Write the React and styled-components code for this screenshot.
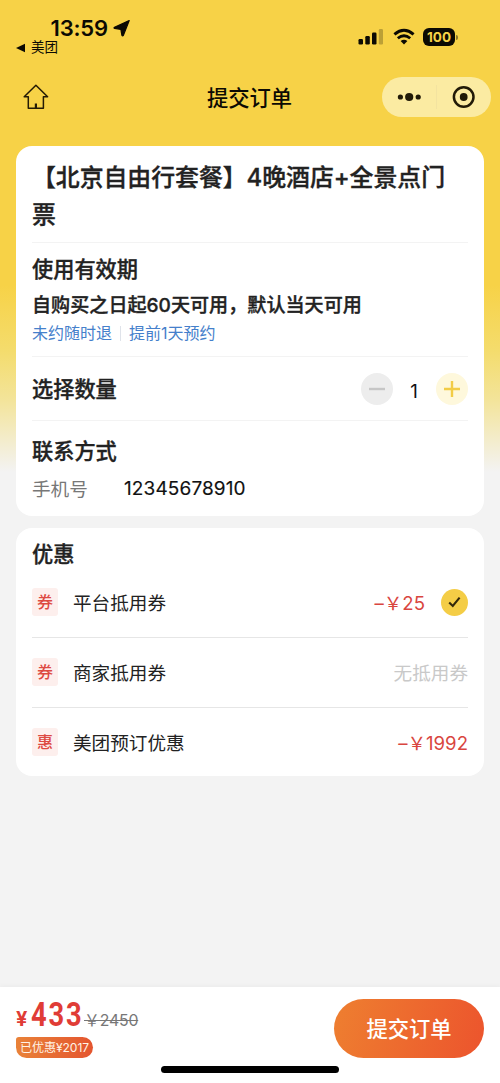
import React, { useState } from "react";
import styled, { createGlobalStyle, css } from "styled-components";

const GlobalStyle = createGlobalStyle`
  * {
    box-sizing: border-box;
  }
  body {
    margin: 0;
    font-family: Inter, "Noto Sans CJK SC", sans-serif;
    color: #222;
  }
  button {
    font-family: inherit;
    border: 0;
    padding: 0;
    cursor: pointer;
  }
`;

// between medium and bold
const semibold = css`
  font-weight: 500;
  -webkit-text-stroke: 0.35px currentColor;
`;

const Page = styled.div`
  width: 500px;
  height: 1083px;
  display: flex;
  flex-direction: column;
  overflow: hidden;
  background: linear-gradient(
    #f7d247 0,
    #f7d247 285px,
    #f4dc6c 350px,
    #f3e49a 400px,
    #f3f3f3 472px
  );
`;

// status bar
const StatusBar = styled.div`
  height: 74px;
  padding: 0 42px 0 15px;
  display: flex;
  justify-content: space-between;
  color: #0c0a03;
`;

const StatusLeft = styled.div`
  padding-top: 15px;
`;

const Clock = styled.div`
  height: 25px;
  padding-left: 35.5px;
  display: flex;
  align-items: center;
  gap: 5px;
  font-size: 22px;
  font-weight: 600;
  letter-spacing: -0.15px;
`;

const BackApp = styled.div`
  height: 15px;
  display: flex;
  align-items: center;
  gap: 5px;
  font-size: 13.5px;
  line-height: 15px;
`;

const StatusIcons = styled.div`
  height: 74px;
  display: flex;
  align-items: center;
`;

// navigation
const NavBar = styled.div`
  height: 46px;
  padding: 0 9px 0 23px;
  display: grid;
  grid-template-columns: 109px 1fr 109px;
  align-items: center;
  color: #0c0a03;
`;

const NavTitle = styled.div`
  text-align: center;
  font-size: 21.3px;
  font-weight: 500;
  padding: 0 15px 2px 0;
`;

const Capsule = styled.div`
  width: 109px;
  height: 40px;
  border-radius: 20px;
  background: #fbeba2;
  display: flex;
  align-items: center;
  justify-content: center;
`;

const Content = styled.div`
  flex: 1;
  padding: 26px 16px 0;
  display: flex;
  flex-direction: column;
  gap: 12px;
`;

const Card = styled.div`
  height: ${({ $height }) => $height}px;
  padding: 0 16px;
  border-radius: 16px;
  background: white;
`;

const Section = styled.div`
  height: ${({ $height }) => $height}px;
  padding-top: ${({ $top }) => $top || 0}px;
  border-bottom: ${({ $last }) => ($last ? "0" : "1px solid #f3f3f3")};
`;

const Title = styled.div`
  ${semibold}
  font-size: 23.9px;
  letter-spacing: -0.05px;
  line-height: 37px;
`;

const Heading = styled.div`
  ${semibold}
  font-size: 21.2px;
  line-height: 32px;
`;

const Validity = styled.div`
  ${semibold}
  margin-top: 6px;
  font-size: 19.1px;
  line-height: 28px;
`;

const Rules = styled.div`
  display: flex;
  align-items: center;
  font-size: 16px;
  line-height: 29px;
  color: #4580cb;
`;

const RuleDivider = styled.span`
  width: 1px;
  height: 15px;
  margin: 0 8px;
  background: #dfe3ea;
`;

const QuantityRow = styled(Section)`
  display: flex;
  align-items: center;
  justify-content: space-between;
`;

const Stepper = styled.div`
  display: flex;
  align-items: center;
`;

const StepButton = styled.button`
  width: 32px;
  height: 32px;
  border-radius: 50%;
  display: flex;
  align-items: center;
  justify-content: center;
  color: ${({ $active }) => ($active ? "#f2cc46" : "#c6c6c6")};
  background: ${({ $active }) => ($active ? "#fef8dc" : "#ededed")};
`;

const Count = styled.span`
  width: 43px;
  padding: 5px 1px 0 0;
  text-align: center;
  font-size: 18.7px;
  color: #111;
`;

const ContactRow = styled.div`
  display: flex;
  align-items: center;
  margin-top: 8px;
  font-size: 18.6px;
  line-height: 28px;
`;

const Label = styled.span`
  width: 92px;
  color: #777;
`;

const Phone = styled.span`
  color: #111;
  font-size: 19px;
  letter-spacing: 0.12px;
  -webkit-text-stroke: 0.15px currentColor;
`;

// discounts
const DiscountRow = styled.div`
  height: 70px;
  display: flex;
  align-items: center;
  border-bottom: 1px solid ${({ $last }) => ($last ? "transparent" : "#e6e6e6")};
`;

const Tag = styled.span`
  width: 26px;
  height: 28px;
  border-radius: 3px;
  display: flex;
  align-items: center;
  justify-content: center;
  padding-bottom: 2px;
  font-size: 16px;
  font-weight: 500;
  color: #dd4a42;
  background: #fdefed;
`;

const DiscountName = styled.span`
  flex: 1;
  padding: 0 0 1px 15px;
  font-size: 18.6px;
`;

const Amount = styled.span`
  padding-bottom: 1px;
  font-size: 18.6px;
  color: ${({ $empty }) => ($empty ? "#c9c9c9" : "#d9463f")};
`;

const Check = styled.span`
  width: 27px;
  height: 27px;
  margin-left: 16px;
  border-radius: 50%;
  display: flex;
  align-items: center;
  justify-content: center;
  background: #f4cd46;
`;

// bottom bar
const Footer = styled.div`
  height: 96px;
  background: white;
  box-shadow: 0 -1px 5px rgba(0, 0, 0, 0.04);
  display: flex;
  flex-direction: column;
`;

const FooterRow = styled.div`
  height: 79px;
  padding: 12px 16px 0;
  display: flex;
  justify-content: space-between;
`;

const PriceLine = styled.div`
  height: 38px;
  display: flex;
  align-items: baseline;
  color: #e03c36;
  font-weight: 700;
  line-height: 33px;
`;

const Currency = styled.span`
  width: 15px;
  font-size: 20px;
`;

// narrow digits
const Price = styled.span`
  width: 52px;
  font-family: Roboto, sans-serif;
  font-size: 32.5px;
  letter-spacing: 2.2px;
  white-space: nowrap;
  transform: scaleX(0.84);
  transform-origin: 0 50%;
`;

const OldPrice = styled.span`
  margin-left: 1px;
  font-size: 15.8px;
  font-weight: 400;
  letter-spacing: -0.15px;
  color: #777;
  text-decoration: line-through;
`;

const Saved = styled.div`
  width: 77px;
  height: 21px;
  border-radius: 3px 11px 11px 11px;
  text-align: center;
  font-size: 12.1px;
  letter-spacing: -0.1px;
  line-height: 21px;
  white-space: nowrap;
  color: #fff3e6;
  background: linear-gradient(90deg, #e98238, #e4552f);
`;

const Submit = styled.button`
  width: 150px;
  height: 59px;
  border-radius: 30px;
  padding-bottom: 2px;
  font-size: 21.3px;
  font-weight: 500;
  color: white;
  background: linear-gradient(105deg, #ee7f30, #ec542d);
`;

const HomeIndicator = styled.div`
  width: 178px;
  height: 7px;
  margin: 0 auto;
  border-radius: 4px;
  background: black;
`;

const LocationIcon = () => (
  <svg width="18" height="18" viewBox="0 0 18 18">
    <path
      d="M16.2 1.6 1.5 8.2c-.7.3-.6 1 .2 1.1l6.2 1.1 1 5.9c.1.8 1 .9 1.4.2Z"
      fill="currentColor"
      stroke="currentColor"
      strokeWidth="1.2"
      strokeLinejoin="round"
    />
  </svg>
);

const SignalIcon = () => (
  <svg width="26" height="18" viewBox="0 0 26 18" fill="currentColor">
    <rect x="0.5" y="11" width="4.5" height="5.5" rx="1.2" />
    <rect x="7.3" y="8" width="4.5" height="8.5" rx="1.2" />
    <rect x="14" y="4.5" width="4.5" height="12" rx="1.2" />
    <rect x="20.8" y="1" width="4.2" height="15.5" rx="1.2" opacity="0.25" />
  </svg>
);

const WifiIcon = () => (
  <svg width="22" height="18" viewBox="0 0 22 18" fill="none" stroke="currentColor">
    <path d="M1.4 6.4Q11 -1.7 20.6 6.4" strokeWidth="2.9" />
    <path d="M4.8 10.3Q11 5.1 17.2 10.3" strokeWidth="2.8" />
    <path d="M7.6 13.1Q11 10.4 14.4 13.1L11 16.6Z" fill="currentColor" stroke="none" />
  </svg>
);

const BatteryBox = styled.div`
  width: 32px;
  height: 18px;
  border-radius: 6px;
  background: #0c0a03;
  color: #f7d247;
  font-size: 13.5px;
  font-weight: 700;
  line-height: 18px;
  text-align: center;
`;

const BatteryTip = styled.div`
  width: 2px;
  height: 5px;
  margin-left: 1px;
  border-radius: 0 2px 2px 0;
  background: #8c782d;
`;

const HomeIcon = () => (
  <svg width="26" height="26" viewBox="0 0 26 26" fill="none" stroke="#251b05" strokeWidth="1.5" strokeLinejoin="round">
    <path d="M12.9 1.2 1.2 12.7H5.3V24.3H20.4V12.7H24.6Z" />
    <path d="M12.9 19.5V24" strokeWidth="2.2" />
  </svg>
);

const CapsuleIcons = () => (
  <svg width="109" height="40" viewBox="0 0 109 40" fill="#211a07">
    <circle cx="18.4" cy="20" r="2.6" />
    <circle cx="27.2" cy="20" r="4.1" />
    <circle cx="36.2" cy="20" r="2.6" />
    <path d="M54.5 8V32" stroke="#f3e3a0" />
    <circle cx="81.7" cy="20" r="9.8" fill="none" stroke="#211a07" strokeWidth="2.5" />
    <circle cx="81.7" cy="20" r="3.9" />
  </svg>
);

const discounts = [
  { tag: "券", name: "平台抵用券", amount: "–￥25", checked: true },
  { tag: "券", name: "商家抵用券", amount: "无抵用券", empty: true },
  { tag: "惠", name: "美团预订优惠", amount: "–￥1992" },
];

const App = () => {
  const [count, setCount] = useState(1);

  return (
    <>
      <GlobalStyle />
      <Page>
        <StatusBar>
          <StatusLeft>
            <Clock>
              13:59
              <LocationIcon />
            </Clock>
            <BackApp>
              <svg width="11" height="10" viewBox="0 0 11 10">
                <path d="M1 5 10 .8V9.2Z" fill="currentColor" />
              </svg>
              美团
            </BackApp>
          </StatusLeft>
          <StatusIcons>
            <SignalIcon />
            <svg width="9" height="1" />
            <WifiIcon />
            <svg width="8" height="1" />
            <BatteryBox>100</BatteryBox>
            <BatteryTip />
          </StatusIcons>
        </StatusBar>
        <NavBar>
          <HomeIcon />
          <NavTitle>提交订单</NavTitle>
          <Capsule>
            <CapsuleIcons />
          </Capsule>
        </NavBar>
        <Content>
          <Card $height={369.5}>
            <Section $height={97} $top={13}>
              <Title>【北京自由行套餐】4晚酒店+全景点门票</Title>
            </Section>
            <Section $height={114} $top={10}>
              <Heading>使用有效期</Heading>
              <Validity>自购买之日起60天可用，默认当天可用</Validity>
              <Rules>
                未约随时退
                <RuleDivider />
                提前1天预约
              </Rules>
            </Section>
            <QuantityRow $height={64}>
              <Heading>选择数量</Heading>
              <Stepper>
                <StepButton onClick={() => setCount(Math.max(1, count - 1))}>
                  <svg width="16" height="16" viewBox="0 0 16 16">
                    <path d="M0 8H16" stroke="currentColor" strokeWidth="2.4" />
                  </svg>
                </StepButton>
                <Count>{count}</Count>
                <StepButton $active onClick={() => setCount(count + 1)}>
                  <svg width="16" height="16" viewBox="0 0 16 16">
                    <path d="M0 8H16M8 0V16" stroke="currentColor" strokeWidth="2.4" />
                  </svg>
                </StepButton>
              </Stepper>
            </QuantityRow>
            <Section $height={94} $top={14} $last>
              <Heading>联系方式</Heading>
              <ContactRow>
                <Label>手机号</Label>
                <Phone>12345678910</Phone>
              </ContactRow>
            </Section>
          </Card>
          <Card $height={248}>
            <Section $height={40} $top={10} $last>
              <Heading>优惠</Heading>
            </Section>
            {discounts.map((item, i) => (
              <DiscountRow key={item.name} $last={i === discounts.length - 1}>
                <Tag>{item.tag}</Tag>
                <DiscountName>{item.name}</DiscountName>
                <Amount $empty={item.empty}>{item.amount}</Amount>
                {item.checked && (
                  <Check>
                    <svg width="13" height="12" viewBox="0 0 13 12">
                      <path d="M1.2 6.4 4.8 10 11.6 1.6" fill="none" stroke="#33280a" strokeWidth="2.1" />
                    </svg>
                  </Check>
                )}
              </DiscountRow>
            ))}
          </Card>
        </Content>
        <Footer>
          <FooterRow>
            <div>
              <PriceLine>
                <Currency>¥</Currency>
                <Price>433</Price>
                <OldPrice>￥2450</OldPrice>
              </PriceLine>
              <Saved>已优惠¥2017</Saved>
            </div>
            <Submit>提交订单</Submit>
          </FooterRow>
          <HomeIndicator />
        </Footer>
      </Page>
    </>
  );
};

export default App;
